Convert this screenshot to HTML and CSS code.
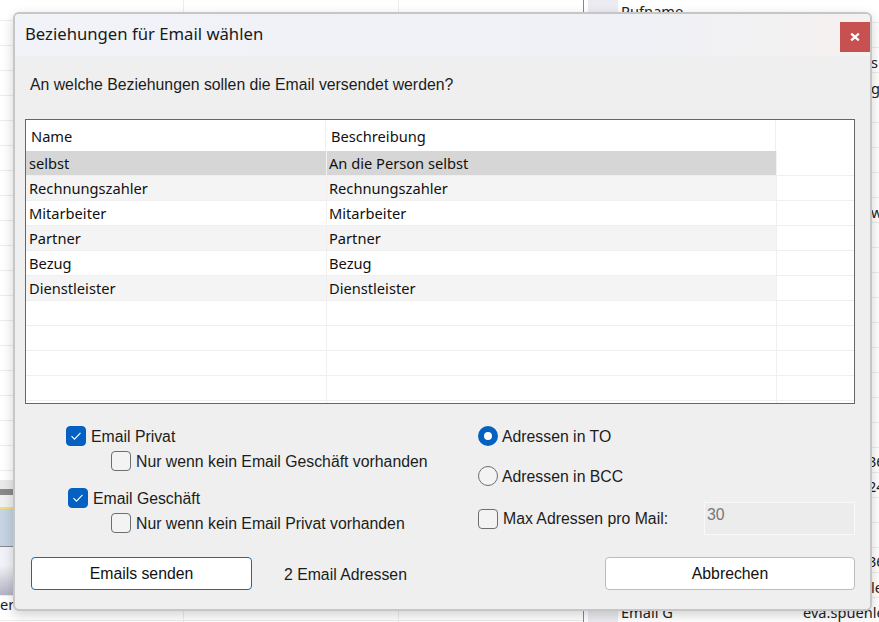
FILE: index.html
```html
<!DOCTYPE html>
<html lang="de">
<head>
<meta charset="UTF-8" />
<title>Beziehungen für Email wählen</title>
<link rel="stylesheet" href="styles.css">
</head>
<body>

<!-- application behind the dialog -->
<div class="backdrop">
  <div class="bg-sheet"></div>
  <div class="bg-left-strip"></div>
  <div class="bg-left-tail">er</div>
  <div class="bg-pane">
    <span class="bg-text bg-rufname">Rufname</span>
    <span class="bg-text bg-s">s</span>
    <span class="bg-text bg-g">g</span>
    <span class="bg-text bg-w">w</span>
    <span class="bg-text bg-n1">36</span>
    <span class="bg-text bg-n2">24</span>
    <span class="bg-text bg-n3">36</span>
    <span class="bg-text bg-le">le</span>
    <span class="bg-text bg-email">Email G</span>
    <span class="bg-text bg-mail">eva.spuenle</span>
  </div>
</div>

<div class="dialog">
  <div class="titlebar">
    <span class="title">Beziehungen für Email wählen</span>
    <button class="close" title="Schliessen">
      <svg width="10" height="10" viewBox="0 0 10 10"><path d="M1.2 1.6 8.8 8.4M8.8 1.6 1.2 8.4" stroke="#fff" stroke-width="2.2" fill="none"/></svg>
    </button>
  </div>

  <p class="question">An welche Beziehungen sollen die Email versendet werden?</p>

  <div class="grid">
    <div class="row head"><div class="cell head-cell">Name</div><div class="cell head-cell">Beschreibung</div><div class="cell"></div></div>
    <div class="row selected"><div class="cell">selbst</div><div class="cell">An die Person selbst</div><div class="cell"></div></div>
    <div class="row alt"><div class="cell">Rechnungszahler</div><div class="cell">Rechnungszahler</div><div class="cell"></div></div>
    <div class="row"><div class="cell">Mitarbeiter</div><div class="cell">Mitarbeiter</div><div class="cell"></div></div>
    <div class="row alt"><div class="cell">Partner</div><div class="cell">Partner</div><div class="cell"></div></div>
    <div class="row"><div class="cell">Bezug</div><div class="cell">Bezug</div><div class="cell"></div></div>
    <div class="row alt"><div class="cell">Dienstleister</div><div class="cell">Dienstleister</div><div class="cell"></div></div>
    <div class="row"><div class="cell"></div><div class="cell"></div><div class="cell"></div></div>
    <div class="row"><div class="cell"></div><div class="cell"></div><div class="cell"></div></div>
    <div class="row"><div class="cell"></div><div class="cell"></div><div class="cell"></div></div>
    <div class="row"><div class="cell"></div><div class="cell"></div><div class="cell"></div></div>
    <div class="row"><div class="cell"></div><div class="cell"></div><div class="cell"></div></div>
  </div>

  <div class="options">
    <div class="options-left">
      <label class="opt opt-privat"><span class="box checked"><svg width="12" height="10" viewBox="0 0 12 10"><path d="M1.5 5.2 4.5 8.2 10.5 1.8" stroke="#fff" stroke-width="1.1" fill="none"/></svg></span>Email Privat</label>
      <label class="opt opt-sub"><span class="box"></span>Nur wenn kein Email Geschäft vorhanden</label>
      <label class="opt opt-geschaeft"><span class="box checked"><svg width="12" height="10" viewBox="0 0 12 10"><path d="M1.5 5.2 4.5 8.2 10.5 1.8" stroke="#fff" stroke-width="1.1" fill="none"/></svg></span>Email Geschäft</label>
      <label class="opt opt-sub"><span class="box"></span>Nur wenn kein Email Privat vorhanden</label>
    </div>
    <div class="options-right">
      <label class="opt opt-radio"><span class="radio on"></span>Adressen in TO</label>
      <label class="opt opt-radio"><span class="radio"></span>Adressen in BCC</label>
      <div class="max-row">
        <label class="opt"><span class="box"></span>Max Adressen pro Mail:</label>
        <div class="max-input">30</div>
      </div>
    </div>
  </div>

  <div class="footer">
    <button class="btn btn-send">Emails senden</button>
    <span class="count">2 Email Adressen</span>
    <button class="btn btn-cancel">Abbrechen</button>
  </div>
</div>

</body>
</html>
```

FILE: styles.css
```css
body {
  margin: 0;
  width: 879px;
  height: 622px;
  overflow: hidden;
  background: #fff;
  font-family: "Liberation Sans", Arial, sans-serif;
  color: #111;
}

/* background app */
.backdrop {
  position: absolute;
  left: 0;
  top: 0;
  width: 879px;
  height: 622px;
  overflow: hidden;
}
.bg-sheet {
  position: absolute;
  left: 0;
  top: 0;
  width: 583px;
  height: 622px;
  background-image:
    linear-gradient(#ececec 1px, transparent 1px),
    linear-gradient(90deg, #ececec 1px, transparent 1px);
  background-size: 100% 25px, 215px 100%;
  background-position: 0 20px, 183px 0;
}
.bg-left-strip {
  position: absolute;
  left: 0;
  top: 480px;
  width: 20px;
  height: 115px;
  background: linear-gradient(#e9e9e9 0 9px, #8a8a8a 9px 15px, #f0f0f0 15px 27px, #f3dc7a 27px 29px, #c5d3e2 29px 66px, #85888e 66px 67px, #f2f3f8 67px 85px, #b5b4c6 114px);
}
.bg-left-tail {
  position: absolute;
  left: 0;
  top: 594px;
  font-family: "Noto Sans", sans-serif;
  font-size: 14.6px;
  color: #222;
}
.bg-pane {
  position: absolute;
  left: 583px;
  top: 0;
  width: 296px;
  height: 622px;
  border-left: 1px solid #888;
  box-sizing: border-box;
  background-color: #fff;
  background-image:
    linear-gradient(#ececec 1px, transparent 1px),
    linear-gradient(90deg, #ebebf1 30px, transparent 30px);
  background-size: 100% 25px, 100% 100%;
  background-position: 0 22px, 4px 0;
  background-repeat: repeat, no-repeat;
}
.bg-text {
  position: absolute;
  font-family: "Noto Sans", sans-serif;
  font-size: 14.6px;
  line-height: 18px;
  color: #222;
}
.bg-rufname { left: 37px; top: 2px; }
.bg-s { left: 287px; top: 53px; }
.bg-g { left: 287px; top: 79px; }
.bg-w { left: 287px; top: 203px; }
.bg-n1 { left: 284px; top: 452px; }
.bg-n2 { left: 284px; top: 477px; }
.bg-n3 { left: 284px; top: 552px; }
.bg-le { left: 287px; top: 578px; }
.bg-email { left: 37px; top: 603px; }
.bg-mail { left: 219px; top: 603px; }

/* dialog */
.dialog {
  position: absolute;
  left: 13px;
  top: 12px;
  width: 859px;
  height: 599px;
  box-sizing: border-box;
  border: 2px solid #c6c6c6;
  border-radius: 6px;
  background: #efefef;
  box-shadow: 0 4px 12px rgba(0,0,0,0.18);
}
.titlebar {
  height: 42px;
  display: flex;
  justify-content: space-between;
  background: linear-gradient(90deg, #f1f3f8, #eff1f7 70%, #f5f1ef);
  border-radius: 4px 4px 0 0;
  padding-left: 10px;
}
.title {
  font-family: "Noto Sans", sans-serif;
  font-size: 16.7px;
  line-height: 40px;
  color: #1a1a1a;
}
.close {
  width: 30px;
  height: 30px;
  margin: 8px 0 0 0;
  padding: 0;
  border: 0;
  background: #c75050;
  display: flex;
  align-items: center;
  justify-content: center;
}
.question {
  margin: 19px 0 0 15px;
  font-size: 15.8px;
  line-height: 20px;
  height: 20px;
  color: #1c1c1c;
}

/* table */
.grid {
  width: 830px;
  height: 285px;
  margin: 24px 0 0 10px;
  box-sizing: border-box;
  border: 1px solid #666;
  background: #fff;
  overflow: hidden;
  font-family: "Noto Sans", sans-serif;
  font-size: 14.65px;
  color: #111;
}
.row {
  display: grid;
  grid-template-columns: 301px 450px 77px;
  height: 25px;
  box-sizing: border-box;
  border-bottom: 1px solid #efefef;
}
.row.head {
  grid-template-columns: 300px 450px 78px;
  height: 31px;
  border-bottom: 0;
}
.cell {
  padding-left: 3px;
  line-height: 24px;
  border-right: 1px solid #efefef;
}
.cell:nth-child(2) {
  padding-left: 2px;
}
.cell:last-child {
  border-right: 0;
}
.row .head-cell {
  padding-left: 5px;
  line-height: 32px;
}
.selected .cell:nth-child(-n+2) {
  background: #d6d6d6;
  border-right-color: #f2f2f2;
}
.alt .cell:nth-child(-n+2) {
  background: #f4f4f4;
}

/* options */
.options {
  display: flex;
  margin-top: 22px;
  height: 128px;
  font-size: 15.8px;
}
.options-left {
  width: 463px;
  padding-left: 51px;
  box-sizing: border-box;
}
.opt {
  display: flex;
  align-items: flex-start;
  gap: 5px;
  height: 20px;
  line-height: 22px;
  color: #1c1c1c;
}
.opt-sub {
  margin: 5px 0 0 45px;
}
.opt-geschaeft {
  margin: 17px 0 0 2px;
}
.box {
  width: 18px;
  height: 18px;
  flex: none;
  border: 1px solid #6e6e6e;
  border-radius: 4px;
  background: #f3f3f3;
  display: flex;
  align-items: center;
  justify-content: center;
}
.box.checked {
  background: #0461c1;
  border-color: #0461c1;
}
.options-right {
  flex: 1;
}
.opt-radio {
  margin-bottom: 20px;
  gap: 4px;
}
.radio {
  width: 18px;
  height: 18px;
  flex: none;
  border: 1px solid #6e6e6e;
  border-radius: 50%;
  background: #f3f3f3;
}
.radio.on {
  width: 8px;
  height: 8px;
  border: 6px solid #0461c1;
  background: #fff;
}
.max-row {
  display: flex;
  align-items: center;
  justify-content: space-between;
  width: 377px;
  margin-top: -4px;
}
.max-row .opt {
  line-height: 20px;
}
.max-input {
  width: 151px;
  height: 33px;
  box-sizing: border-box;
  border: 1px solid #f8f8f8;
  background: #ececec;
  color: #777;
  font-size: 15.8px;
  padding: 3px 0 0 2px;
}

/* footer row */
.footer {
  display: flex;
  align-items: center;
  margin: 3px 0 0 16px;
  height: 33px;
}
.btn {
  height: 33px;
  box-sizing: border-box;
  background: #fff;
  border: 1px solid #bcbcbc;
  border-radius: 4px;
  font-family: "Liberation Sans", Arial, sans-serif;
  font-size: 15.8px;
  color: #111;
  padding: 0;
}
.btn-send {
  width: 221px;
  border-color: #0f6cbd;
}
.count {
  margin-left: 32px;
  padding-top: 2px;
  font-size: 15.8px;
  flex: 1;
  color: #1c1c1c;
}
.btn-cancel {
  width: 250px;
  margin-right: 15px;
}
```
